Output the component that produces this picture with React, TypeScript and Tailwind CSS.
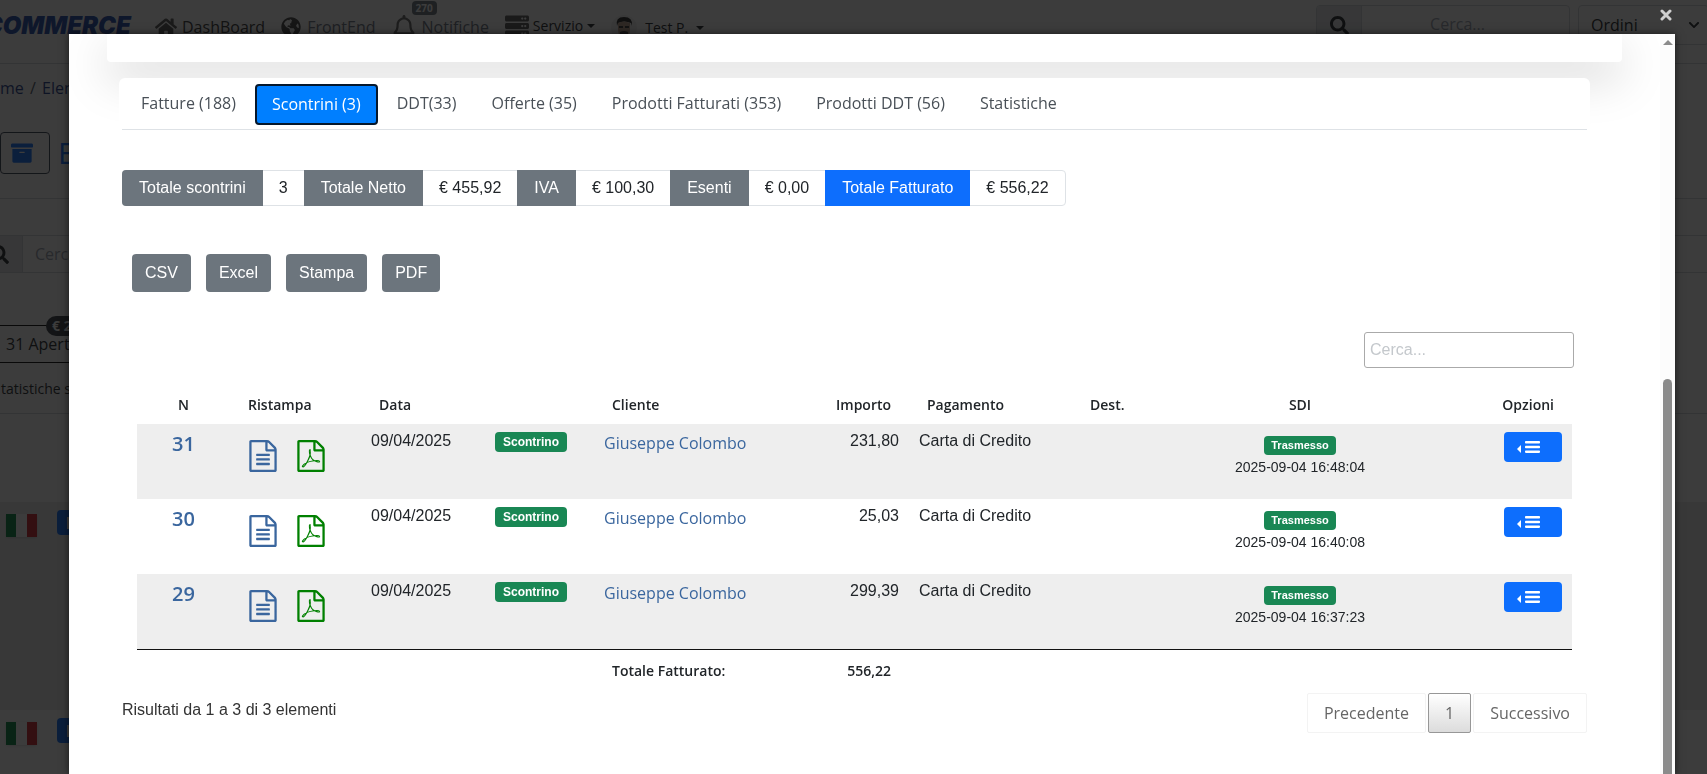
import React from "react";
import { FaHome, FaGlobeAmericas, FaRegBell, FaServer, FaSearch, FaArchive, FaChevronDown } from "react-icons/fa";

const tabs = [
  "Fatture (188)",
  "Scontrini (3)",
  "DDT(33)",
  "Offerte (35)",
  "Prodotti Fatturati (353)",
  "Prodotti DDT (56)",
  "Statistiche",
];

const totals = [
  { label: "Totale scontrini", value: "3" },
  { label: "Totale Netto", value: "€ 455,92" },
  { label: "IVA", value: "€ 100,30" },
  { label: "Esenti", value: "€ 0,00" },
  { label: "Totale Fatturato", value: "€ 556,22", primary: true },
];

const rows = [
  { n: 31, amount: "231,80", sent: "2025-09-04 16:48:04" },
  { n: 30, amount: "25,03", sent: "2025-09-04 16:40:08" },
  { n: 29, amount: "299,39", sent: "2025-09-04 16:37:23" },
];

const sheet =
  "M1468 380q28 28 48 76t20 88v1152q0 40-28 68t-68 28h-1344q-40 0-68-28t-28-68v-1600q0-40 28-68t68-28h896q40 0 88 20t76 48zm-444-244v376h376q-10-29-22-41l-313-313q-12-12-41-22zm384 1528v-1024h-416q-40 0-68-28t-28-68v-416h-768v1536h1280z";
const textLines =
  "m-1024-864q0-14 9-23t23-9h704q14 0 23 9t9 23v64q0 14-9 23t-23 9h-704q-14 0-23-9t-9-23v-64zm736 224q14 0 23 9t9 23v64q0 14-9 23t-23 9h-704q-14 0-23-9t-9-23v-64q0-14 9-23t23-9h704zm0 256q14 0 23 9t9 23v64q0 14-9 23t-23 9h-704q-14 0-23-9t-9-23v-64q0-14 9-23t23-9h704z";
const acrobat =
  "m-514-593q33 26 84 56 59-7 117-7 147 0 177 49 16 22 2 52 0 1-1 2l-2 2v1q-6 38-71 38-48 0-115-20t-130-53q-221 24-392 83-153 262-242 262-15 0-28-7l-24-12q-1-1-6-5-10-10-6-36 9-40 56-91.5t132-96.5q14-9 23 6 2 2 2 4 52-85 107-197 68-136 104-262-24-82-30.5-159.5t6.5-127.5q11-40 42-40h22q23 0 35 15 18 21 9 68-2 6-4 8 1 3 1 8v30q-2 123-14 192 55 164 146 238zm-576 411q52-24 137-158-51 40-87.5 84t-49.5 74zm398-920q-15 42-2 132 1-7 7-44 0-3 7-43 1-4 4-8-1-1-1-2-1-2-1-3-1-22-13-36 0 1-1 2v2zm-124 661q135-54 284-81-2-1-13-9.5t-16-13.5q-76-67-127-176-27 86-83 197-30 56-45 83zm646-16q-24-24-140-24 76 28 124 28 14 0 18-1 0-1-2-3z";

function FileIcon({ glyph }: { glyph: string }) {
  return (
    <svg viewBox="0 0 1536 1792" className="h-8 w-7" fill="currentColor" aria-hidden="true">
      <path d={sheet + glyph} />
    </svg>
  );
}

function Caret() {
  return <span className="border-x-4 border-t-4 border-x-transparent border-t-current" />;
}

function Flag() {
  return (
    <span className="ml-1.5 flex h-[23px] w-[31px] shrink-0 shadow">
      <span className="flex-1 bg-[#00843f]" />
      <span className="flex-1 bg-white" />
      <span className="flex-1 bg-[#d0202c]" />
    </span>
  );
}

function BackgroundRow() {
  return (
    <div className="flex gap-5 pt-3">
      <Flag />
      <span className="-mt-1 flex h-[25px] w-14 items-center rounded bg-[#0d6efd] pl-2.5 text-white">
        <span className="h-3 w-4 border-2 border-white" />
      </span>
    </div>
  );
}

function ShopPage() {
  return (
    <div className="h-screen overflow-hidden bg-white text-[#212529]" aria-hidden="true">
      <header className="flex h-16 items-start justify-between border-b border-gray-300">
        <div className="flex h-full items-start">
          <span className="-ml-8 mt-2.5 w-[163px] text-right font-['Inter'] text-2xl leading-8 font-black text-[#1b45a8] italic">
            COMMERCE
          </span>
          <span className="mt-[15px] ml-6 flex items-center gap-[5px] leading-6 text-[#333]">
            <FaHome className="size-[22px] text-[#555]" />
            DashBoard
          </span>
          <span className="mt-[15px] ml-4 flex items-center gap-1.5 leading-6 text-gray-500">
            <FaGlobeAmericas className="size-5 text-[#444]" />
            FrontEnd
          </span>
          <span className="relative mt-[15px] ml-4 flex items-center gap-1.5 leading-6 text-gray-500">
            <FaRegBell className="size-6 text-[#666]" />
            Notifiche
            <span className="absolute -top-3.5 left-5 rounded bg-[#6c757d] px-1 text-[10px] leading-3.5 font-bold text-white">
              270
            </span>
          </span>
          <span className="mt-3.5 ml-4 flex items-center gap-1 text-sm leading-6">
            <FaServer className="size-6 text-[#555]" />
            Servizio
            <Caret />
          </span>
          <span className="mt-[15px] ml-4 flex items-center gap-2 text-sm leading-6">
            <svg viewBox="0 0 26 26" className="size-[26px]">
              <circle cx="13" cy="13" r="13" fill="#eee" />
              <path d="M6 11Q4 2 13 2t8 9l-1-3q-7-3-13 0z" fill="#222" />
              <path d="M7 8q6-3 12 0v6q0 8-6 8t-6-8z" fill="#b99b86" />
              <path d="M8 11h4v2H8zM14 11h4v2h-4zM9 17q4-2 8 0v4q-4 3-8 0z" fill="#333" />
            </svg>
            Test P.
            <Caret />
          </span>
        </div>
        <div className="flex items-start gap-2 pt-[5px]">
          <div className="flex h-10 w-[254px] overflow-hidden rounded border border-gray-300">
            <span className="grid w-[45px] place-items-center border-r border-gray-300 bg-gray-200">
              <FaSearch className="size-[19px]" />
            </span>
            <span className="flex-1 pt-1.5 pr-4 text-center text-gray-400">Cerca...</span>
          </div>
          <div className="-mr-0.5 flex h-10 w-[131px] items-center justify-between rounded border border-gray-300 pr-2 pl-3">
            Ordini
            <FaChevronDown className="size-3" />
          </div>
        </div>
      </header>
      <div className="flex h-[135px] flex-col justify-between border-b border-gray-300 pt-3 pb-6">
        <span className="text-[#1a3a8a]">
          me <span className="px-0.5 text-gray-600">/</span> Elenco
        </span>
        <div className="flex items-center gap-2">
          <span className="flex h-[42px] w-[50px] items-center rounded border border-gray-700 pl-2.5 text-[#0d6efd]">
            <FaArchive className="size-[22px]" />
          </span>
          <span className="text-3xl text-[#0d6efd]">Elenco</span>
        </div>
      </div>
      <div className="mt-9 flex h-[38px] border-y border-gray-300">
        <span className="flex w-[23px] items-center border-r border-gray-300 bg-gray-200">
          <FaSearch className="-ml-2.5 size-[19px] shrink-0" />
        </span>
        <span className="py-1.5 pl-3 text-gray-400">Cerca...</span>
      </div>
      <div className="relative mt-[52px] w-1/2 border-y border-black py-1.5 pl-1.5 leading-6">
        31 Aperti
        <span className="absolute -top-2.5 left-[46px] rounded-full bg-[#343a40] px-1.5 text-sm leading-5 font-bold text-white">
          € 245,00
        </span>
      </div>
      <div className="h-[51px] border-b border-gray-300 pt-3.5 pl-px text-sm leading-6">tatistiche sugli ordini</div>
      <div className="mt-[88px] h-[208px] bg-[#ececec]">
        <BackgroundRow />
      </div>
      <BackgroundRow />
    </div>
  );
}

function Tabs() {
  return (
    <nav className="mr-8 ml-3 rounded-md bg-white px-[3px]">
      <div className="flex h-[52px] gap-[3px] border-b border-[#dee2e6] pt-1.5 pl-[3px]">
        {tabs.map((tab, i) =>
          i === 1 ? (
            <button
              key={tab}
              className="h-[41px] rounded border-2 border-[#06182c] bg-[#007fff] px-[15px] pb-0.5 leading-6 text-white"
            >
              {tab}
            </button>
          ) : (
            <button key={tab} className="h-[38px] px-4 leading-6 text-[#495057]">
              {tab}
            </button>
          ),
        )}
      </div>
    </nav>
  );
}

function Totals() {
  return (
    <dl className="flex h-9 w-fit rounded border border-[#dee2e6] font-['Liberation_Sans',sans-serif] leading-[34px]">
      {totals.map((t) => (
        <React.Fragment key={t.label}>
          <dt
            className={
              t.primary
                ? "-my-px bg-[#0d6efd] px-[17px] pt-px text-white"
                : "-my-px bg-[#6c757d] px-[17px] pt-px text-white first:-ml-px first:rounded-l"
            }
          >
            {t.label}
          </dt>
          <dd className="px-4">{t.value}</dd>
        </React.Fragment>
      ))}
    </dl>
  );
}

function ReceiptsTable() {
  return (
    <table className="w-full table-fixed border-collapse text-left">
      <colgroup>
        <col className="w-[93px]" />
        <col className="w-[131px]" />
        <col className="w-[124px]" />
        <col className="w-[109px]" />
        <col className="w-[224px]" />
        <col className="w-[91px]" />
        <col className="w-[163px]" />
        <col className="w-[71px]" />
        <col className="w-[314px]" />
        <col className="w-[115px]" />
      </colgroup>
      <thead className="text-sm leading-5">
        <tr className="h-10 [&>th]:px-[18px] [&>th]:pt-0.5 [&>th]:font-semibold">
          <th className="text-center">N</th>
          <th>Ristampa</th>
          <th>Data</th>
          <th />
          <th>Cliente</th>
          <th className="text-right">Importo</th>
          <th>Pagamento</th>
          <th>Dest.</th>
          <th className="text-center">SDI</th>
          <th className="text-right">Opzioni</th>
        </tr>
      </thead>
      <tbody className="border-b border-[#111] font-['Liberation_Sans',sans-serif] leading-6">
        {rows.map((r) => (
          <tr key={r.n} className="h-[75px] odd:bg-[#eeeeee] [&>td]:px-2.5 [&>td]:pt-[5px] [&>td]:align-top">
            <td className="text-center">
              <a href="#" className="block font-['Open_Sans',sans-serif] text-xl leading-[30px] font-semibold text-[#3a669e]">
                {r.n}
              </a>
            </td>
            <td>
              <div className="flex gap-5 pt-[11px] pl-[9px]">
                <a href="#" aria-label="Ristampa" className="text-[#3a669e]">
                  <FileIcon glyph={textLines} />
                </a>
                <a href="#" aria-label="PDF" className="text-[#008000]">
                  <FileIcon glyph={acrobat} />
                </a>
              </div>
            </td>
            <td>09/04/2025</td>
            <td>
              <span className="mt-[3px] block w-18 rounded bg-[#198754] text-center text-xs leading-5 font-bold text-white">
                Scontrino
              </span>
            </td>
            <td>
              <a href="#" className="block pt-0.5 font-['Open_Sans',sans-serif] text-[#3a669e]">
                Giuseppe Colombo
              </a>
            </td>
            <td className="text-right">{r.amount}</td>
            <td>Carta di Credito</td>
            <td />
            <td>
              <div className="flex flex-col items-center pt-[7px] text-sm leading-6">
                <span className="rounded bg-[#198754] px-[7px] text-[11px] leading-[19px] font-bold text-white">
                  Trasmesso
                </span>
                {r.sent}
              </div>
            </td>
            <td>
              <button
                aria-label="Opzioni"
                className="mt-[3px] ml-auto flex h-[30px] w-[58px] items-center rounded bg-[#0d6efd] pl-[13px] text-white"
              >
                <svg viewBox="0 0 23 12" className="h-3 w-[23px]" fill="currentColor" aria-hidden="true">
                  <path d="M4 4v8L0 8z" />
                  <rect x="8" width="15" height="2.5" rx=".8" />
                  <rect x="8" y="4.7" width="15" height="2.5" rx=".8" />
                  <rect x="8" y="9.4" width="15" height="2.5" rx=".8" />
                </svg>
              </button>
            </td>
          </tr>
        ))}
      </tbody>
      <tfoot className="text-sm leading-5">
        <tr className="h-[43px] [&>td]:px-[18px] [&>td]:font-semibold">
          <td colSpan={4} />
          <td>Totale Fatturato:</td>
          <td className="text-right">556,22</td>
          <td colSpan={4} />
        </tr>
      </tfoot>
    </table>
  );
}

export default function App() {
  return (
    <div className="font-['Open_Sans',sans-serif] text-base text-[#212529]">
      <ShopPage />
      <div className="fixed inset-0 flex bg-[#0b0b0b]/80 pt-[34px] pr-8 pl-[69px]">
        <button aria-label="Chiudi" className="absolute top-[7px] right-[33px] p-0.5 text-[#cfcfcf]">
          <svg viewBox="0 0 12 12" className="size-3" stroke="currentColor" strokeWidth="3" strokeLinecap="round">
            <path d="M2 2l8 8M10 2l-8 8" />
          </svg>
        </button>
        <main role="dialog" className="flex flex-1 overflow-hidden bg-white shadow-[0_0_8px_rgba(0,0,0,.6)]">
          <div className="flex-1 pr-[53px] pl-[38px]">
            <div className="mb-4 h-7 rounded-b bg-white shadow-[0_16px_48px_rgba(0,0,0,.175)]" />
            <div className="relative">
              <Tabs />
              <section className="mr-9 ml-[15px] pt-10">
                <Totals />
                <div className="mt-12 ml-2.5 flex gap-[15px] font-['Liberation_Sans',sans-serif] text-white">
                  {["CSV", "Excel", "Stampa", "PDF"].map((b) => (
                    <button key={b} className="h-[38px] rounded bg-[#6c757d] px-[13px]">
                      {b}
                    </button>
                  ))}
                </div>
                <div className="mt-10 mr-3 flex justify-end">
                  <input
                    type="search"
                    aria-label="Cerca"
                    placeholder="Cerca..."
                    className="h-9 w-[210px] rounded-[3px] border border-[#aaa] px-[5px] font-['Liberation_Sans',sans-serif] placeholder:text-[#c4c8cc]"
                  />
                </div>
                <div className="mt-4 mr-3.5 ml-[15px]">
                  <ReceiptsTable />
                </div>
                <div className="-mr-px flex items-start justify-between">
                  <p className="pt-1.5 font-['Liberation_Sans',sans-serif] leading-6 text-[#333]">
                    Risultati da 1 a 3 di 3 elementi
                  </p>
                  <div className="flex h-10 gap-0.5 pt-px text-[#666]">
                    <button className="h-10 rounded-xs border border-[#f3f3f3] px-4">Precedente</button>
                    <button className="h-10 rounded-xs border border-[#979797] bg-linear-to-b from-white to-[#dcdcdc] px-4">
                      1
                    </button>
                    <button className="h-10 rounded-xs border border-[#f3f3f3] px-4">Successivo</button>
                  </div>
                </div>
              </section>
            </div>
          </div>
          <div className="z-10 -ml-[15px] flex w-[15px] shrink-0 flex-col bg-[#fcfcfc] pt-1.5 pl-[3px]">
            <span className="h-0 w-0 border-x-[5px] border-b-[5px] border-x-transparent border-b-[#8b8b8b]" />
            <span className="mt-[334px] w-[9px] flex-1 rounded-t-full bg-[#8b8b8b]" />
          </div>
        </main>
      </div>
    </div>
  );
}
